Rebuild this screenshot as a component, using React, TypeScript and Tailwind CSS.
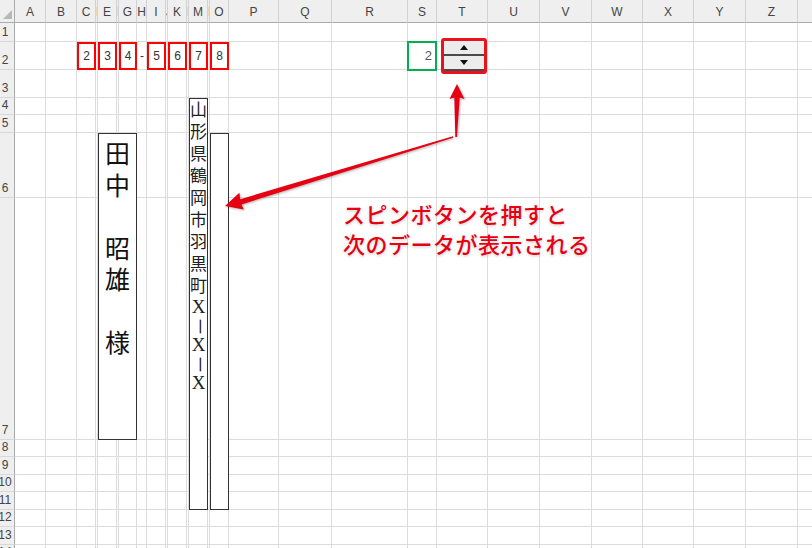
import React from "react";

// column letters + pixel widths (first entry is the row-number gutter)
const COLS: [string, number][] = [
  ["", 15], ["A", 31], ["B", 31], ["C", 19], ["D", 2], ["E", 19], ["F", 2], ["G", 18], ["H", 10],
  ["I", 19], ["J", 2], ["K", 19], ["L", 2], ["M", 19], ["N", 2], ["O", 19], ["P", 50], ["Q", 53],
  ["R", 76], ["S", 29], ["T", 51], ["U", 52], ["V", 52], ["W", 51], ["X", 51], ["Y", 52], ["Z", 52], ["AA", 52],
];
const ROW_COUNT = 15; // header + rows 1..14

const NAME = ["田", "中", "　", "昭", "雄", "　", "様"];
const ADDRESS = ["山", "形", "県", "鶴", "岡", "市", "羽", "黒", "町", "X", "－", "X", "－", "X"];

const Cell = ({ r, c }: { r: number; c: number }) => {
  const pos = { gridRow: r + 1, gridColumn: c + 1 };
  if (r === 0 && c === 0) {
    return (
      <div style={pos} className="relative bg-[#efefef] border-r border-b border-[#ababab]">
        <svg className="absolute right-[2px] bottom-[3px]" width="9" height="9" viewBox="0 0 9 9">
          <path d="M9 0 L9 9 L0 9 Z" fill="#b8b8b8" />
        </svg>
      </div>
    );
  }
  if (r === 0) {
    const [label, w] = COLS[c];
    return (
      <div
        style={pos}
        className={`flex items-center overflow-hidden bg-[#efefef] border-r border-[#d2d2d2] border-b border-b-[#ababab] text-[12px] text-[#444] ${w <= 2 ? "justify-start" : "justify-center"}`}
      >
        <span className="pt-px">{label}</span>
      </div>
    );
  }
  if (c === 0) {
    return (
      <div style={pos} className="flex items-end overflow-hidden bg-[#efefef] border-r border-r-[#ababab] border-b border-[#d8d8d8] text-[12px] leading-[14px] text-[#444]">
        <div className="w-[10px] flex justify-center pb-[2px]">{r}</div>
      </div>
    );
  }
  return <div style={pos} className="border-r border-b border-[#dcdcdc]" />;
};

const Digit = ({ children, className }: { children: React.ReactNode; className: string }) => (
  <div className={`${className} row-start-3 flex items-center justify-center bg-white border-2 border-[#ff0000] text-[12px] text-[#333]`}>
    {children}
  </div>
);

export default function App() {
  const cells: React.ReactNode[] = [];
  for (let r = 0; r < ROW_COUNT; r++) {
    for (let c = 0; c < COLS.length; c++) cells.push(<Cell key={`${r}-${c}`} r={r} c={c} />);
  }

  return (
    <div className="relative w-[812px] h-[548px] overflow-hidden bg-white font-['Liberation_Sans',sans-serif]">
      <div className="grid grid-cols-[15px_31px_31px_19px_2px_19px_2px_18px_10px_19px_2px_19px_2px_19px_2px_19px_50px_53px_76px_29px_51px_52px_52px_51px_51px_52px_52px_52px] grid-rows-[23px_19px_28px_28px_17px_18px_65px_242px_17px_18px_17px_18px_17px_18px_17px]">
        {cells}

        {/* postal code boxes, row 2 */}
        <Digit className="col-start-4">2</Digit>
        <Digit className="col-start-6">3</Digit>
        <Digit className="col-start-8">4</Digit>
        <div className="col-start-9 row-start-3 flex items-center justify-center text-[12px] text-[#333]">-</div>
        <Digit className="col-start-10">5</Digit>
        <Digit className="col-start-12">6</Digit>
        <Digit className="col-start-14">7</Digit>
        <Digit className="col-start-16">8</Digit>

        {/* linked cell + spin button */}
        <div className="col-start-20 row-start-3 -my-px -ml-px flex items-center justify-end pr-[3px] bg-white border-2 border-[#00b050] text-[13px] text-[#555]">
          2
        </div>
        <div className="col-start-21 row-start-3 -my-[4px] ml-[4px] mr-px flex flex-col rounded-[3px] border-[3px] border-[#e8141b] bg-[#e9e9e9]">
          <div className="flex-1 flex items-center justify-center bg-[#ececec] border-b-2 border-[#4a4a4a]">
            <svg width="8" height="5" viewBox="0 0 8 5"><path d="M4 0 L8 5 L0 5 Z" fill="#111" /></svg>
          </div>
          <div className="flex-1 flex items-center justify-center bg-[#ececec] border-b-2 border-[#4a4a4a]">
            <svg width="8" height="5" viewBox="0 0 8 5"><path d="M0 0 L8 0 L4 5 Z" fill="#111" /></svg>
          </div>
        </div>

        {/* recipient name, E6:G7 */}
        <div className="col-start-6 col-span-3 row-start-7 row-span-2 flex flex-col items-center pt-[3px] bg-white border border-[#333] font-['Noto_Sans_CJK_JP',sans-serif] text-[25px] text-[#111]">
          {NAME.map((ch, i) => (
            <span key={i} className="h-[31.5px] leading-[31.5px]">{ch}</span>
          ))}
        </div>

        {/* address, M4:M11 */}
        <div className="col-start-14 row-start-5 row-span-8 flex flex-col items-center pt-px bg-white border border-[#333] font-['Liberation_Serif','Noto_Sans_CJK_JP',serif] text-[17px] text-[#222]">
          {ADDRESS.map((ch, i) => (
            <span
              key={i}
              className={`flex items-center justify-center ${i < 9 ? "h-[22px]" : "h-[19px] text-[19px]"} ${ch === "－" ? "rotate-90" : ""}`}
            >
              {ch}
            </span>
          ))}
        </div>

        {/* empty box, O6:O11 */}
        <div className="col-start-16 row-start-7 row-span-6 bg-white border border-[#333]" />
      </div>

      {/* callout arrows */}
      <svg
        className="absolute inset-0 pointer-events-none drop-shadow-[1px_1px_1px_rgba(0,0,0,0.3)]"
        width="812"
        height="548"
        viewBox="0 0 812 548"
      >
        <path
          d="M455.3 137 L454.3 97.5 L449.5 99 L457 84 L464.5 99 L459.7 97.5 L456.9 137 Z"
          fill="#e60012"
        />
        <path
          d="M452.9 136.3 L240.2 199.2 L239.4 192.8 L225 206 L243.8 209.4 L241.5 204.4 L453.2 137.7 Z"
          fill="#e60012"
        />
      </svg>

      {/* callout text */}
      <div className="absolute left-[343px] top-[198px] whitespace-nowrap font-['Noto_Sans_CJK_JP',sans-serif] font-medium text-[22px] leading-[30px] tracking-[0.5px] text-[#e60012] [text-shadow:0_0_2px_#fff,0_1px_3px_rgba(0,0,0,0.25)]">
        <div>スピンボタンを押すと</div>
        <div>次のデータが表示される</div>
      </div>
    </div>
  );
}
